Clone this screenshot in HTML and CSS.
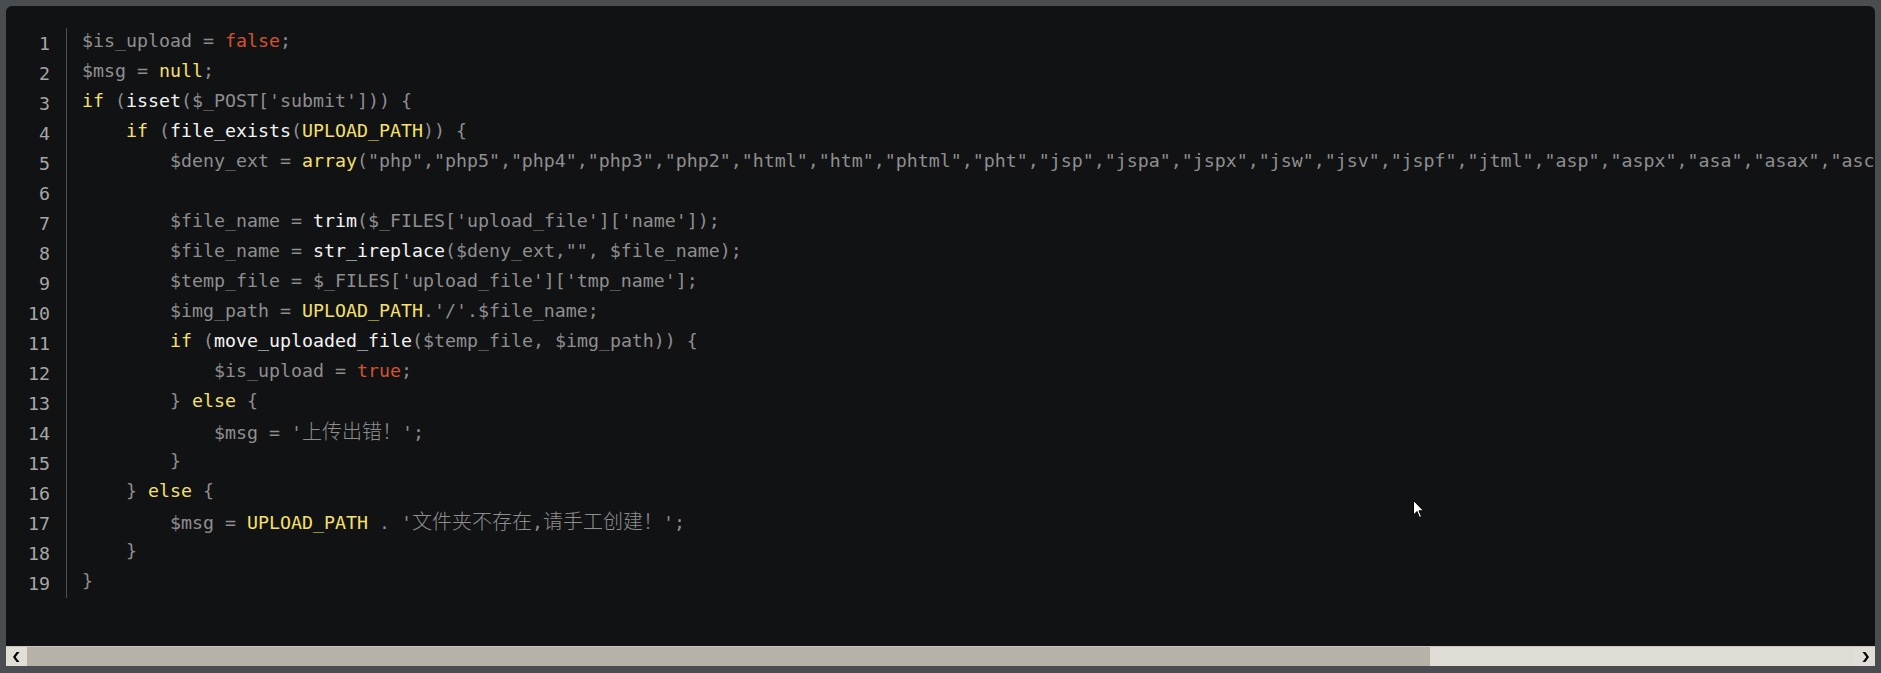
FILE: index.html
```html
<!DOCTYPE html>
<html lang="zh">
<head>
<meta charset="utf-8">
<title>code</title>
<link rel="stylesheet" href="styles.css">
</head>
<body>
<div class="frame">
  <div class="panel">
    <div class="viewport">
      <div class="gutter">
        <div class="ln">1</div><div class="ln">2</div><div class="ln">3</div><div class="ln">4</div><div class="ln">5</div><div class="ln">6</div><div class="ln">7</div><div class="ln">8</div><div class="ln">9</div><div class="ln">10</div><div class="ln">11</div><div class="ln">12</div><div class="ln">13</div><div class="ln">14</div><div class="ln">15</div><div class="ln">16</div><div class="ln">17</div><div class="ln">18</div><div class="ln">19</div>
      </div>
      <div class="code">
        <div class="line">$is_upload = <span class="lit">false</span>;</div>
        <div class="line">$msg = <span class="kw">null</span>;</div>
        <div class="line"><span class="kw">if</span> (<span class="fn">isset</span>($_POST['submit'])) {</div>
        <div class="line">    <span class="kw">if</span> (<span class="fn">file_exists</span>(<span class="kw">UPLOAD_PATH</span>)) {</div>
        <div class="line">        $deny_ext = <span class="kw">array</span>("php","php5","php4","php3","php2","html","htm","phtml","pht","jsp","jspa","jspx","jsw","jsv","jspf","jtml","asp","aspx","asa","asax","ascx","ashx","asmx","cer","swf","htaccess","ini");</div>
        <div class="line"> </div>
        <div class="line">        $file_name = <span class="fn">trim</span>($_FILES['upload_file']['name']);</div>
        <div class="line">        $file_name = <span class="fn">str_ireplace</span>($deny_ext,"", $file_name);</div>
        <div class="line">        $temp_file = $_FILES['upload_file']['tmp_name'];</div>
        <div class="line">        $img_path = <span class="kw">UPLOAD_PATH</span>.'/'.$file_name;</div>
        <div class="line">        <span class="kw">if</span> (<span class="fn">move_uploaded_file</span>($temp_file, $img_path)) {</div>
        <div class="line">            $is_upload = <span class="lit">true</span>;</div>
        <div class="line">        } <span class="kw">else</span> {</div>
        <div class="line">            $msg = '<span class="cjk">上传出错！</span>';</div>
        <div class="line">        }</div>
        <div class="line">    } <span class="kw">else</span> {</div>
        <div class="line">        $msg = <span class="kw">UPLOAD_PATH</span> . '<span class="cjk">文件夹不存在</span>,<span class="cjk">请手工创建！</span>';</div>
        <div class="line">    }</div>
        <div class="line">}</div>
      </div>
    </div>
    <div class="hscroll">
      <div class="sbtn">
        <svg width="8" height="10" viewBox="0 0 8 10"><path d="M6.5 0 L2.6 5 L6.5 10 L3.6 10 L0 5 L3.6 0 Z" fill="#000"/></svg>
      </div>
      <div class="track"><div class="thumb"></div></div>
      <div class="sbtn">
        <svg width="8" height="10" viewBox="0 0 8 10"><path d="M1.5 0 L5.4 5 L1.5 10 L4.4 10 L8 5 L4.4 0 Z" fill="#000"/></svg>
      </div>
    </div>
    <svg class="cursor" width="12" height="19" viewBox="0 0 12 19"><path d="M0.5 0.5 L0.5 15 L4 11.5 L6.5 17.5 L8.5 16.5 L6 10.8 L10.5 10.8 Z" fill="#fff" stroke="#000" stroke-width="1"/></svg>
  </div>
</div>
</body>
</html>
```

FILE: styles.css
```css
html, body {
  margin: 0;
  padding: 0;
  background: #4a4d50;
}
.frame {
  width: 1881px;
  height: 673px;
  box-sizing: border-box;
  padding: 6px 6px 7px 6px;
}
.panel {
  position: relative;
  height: 660px;
  background: #111214;
  border-radius: 6px 6px 0 0;
  overflow: hidden;
  display: flex;
  flex-direction: column;
}
.viewport {
  flex: 1;
  display: flex;
  align-items: flex-start;
  padding-top: 20px;
  overflow: hidden;
  font-family: "DejaVu Sans Mono", "Liberation Mono", monospace;
  font-size: 18.27px;
  line-height: 30px;
  color: #8e8e8e;
}
.gutter {
  flex: none;
  width: 44px;
  margin-top: 2px;
  padding-right: 16px;
  border-right: 1px solid #505050;
  text-align: right;
  color: #a6a6a6;
}
.ln {
  height: 30px;
  padding-top: 1px;
  box-sizing: border-box;
}
.code {
  flex: none;
  padding-left: 15px;
  padding-right: 50px;
}
.line {
  height: 30px;
  white-space: pre;
}
.kw { color: #f6e06a; }
.fn { color: #f4f4f4; }
.lit { color: #d4532c; }
.cjk {
  font-family: "Noto Sans CJK SC", sans-serif;
  font-size: 20px;
  font-weight: 300;
  color: #8e8e8e;
}
.hscroll {
  flex: none;
  height: 20px;
  display: flex;
  background: #dedcd4;
  border-top: 1px solid #cbc7bd;
  box-sizing: border-box;
}
.sbtn {
  flex: none;
  width: 21px;
  display: flex;
  align-items: center;
  justify-content: center;
  background: #e0ded6;
}
.track {
  flex: 1;
  display: flex;
}
.thumb {
  width: 1403px;
  background: #b6b2a7;
}
.cursor {
  position: absolute;
  left: 1407px;
  top: 494px;
}
```
